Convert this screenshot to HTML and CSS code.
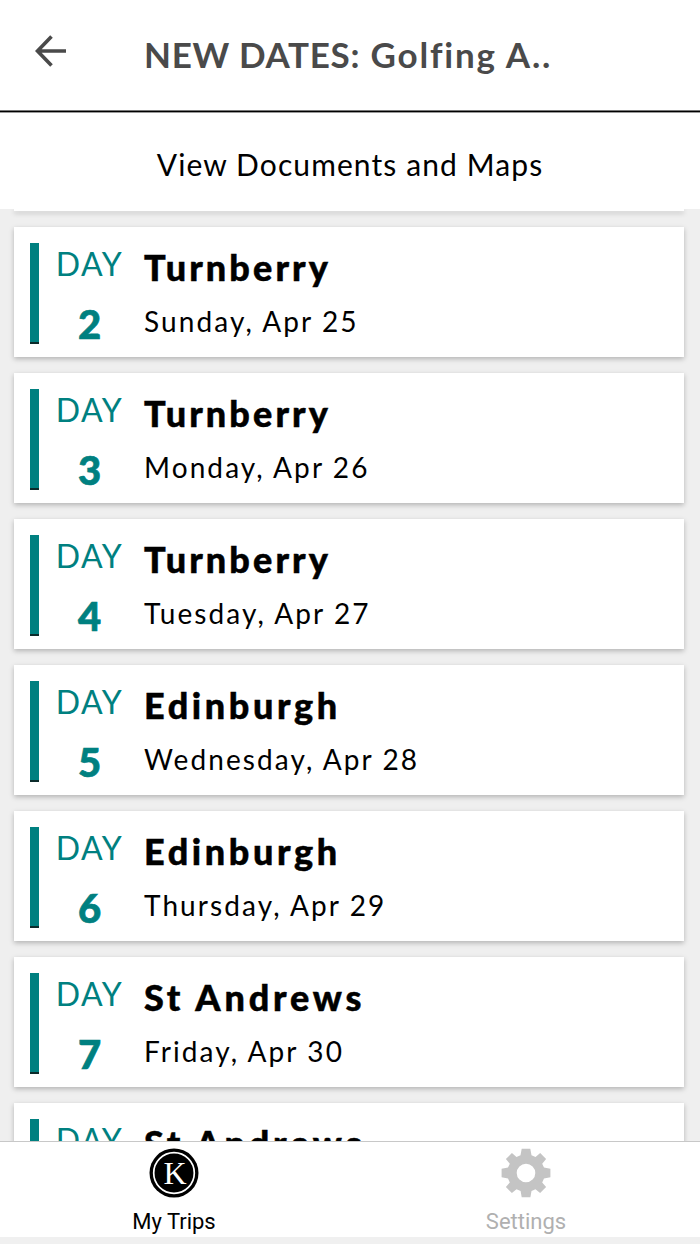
FILE: index.html
```html
<!DOCTYPE html>
<html lang="en">
<head>
  <meta charset="UTF-8">
  <title>My Trips</title>
  <link rel="stylesheet" href="styles.css">
</head>
<body>
  <div class="screen">
    <header class="header">
      <svg class="back" width="32" height="32" viewBox="0 0 32 32">
        <path d="M31 16H3M16.5 1.5L2.5 16L16.5 30.5" fill="none" stroke="#4a4a4a" stroke-width="3.6"/>
      </svg>
      <h1 class="title"><span class="notice">NEW DATES:</span> Golfing A..</h1>
    </header>

    <div class="documents">View Documents and Maps</div>

    <main class="days">
      <div class="card card-end"></div>
      <div class="card">
        <div class="bar"></div>
        <div class="day"><span class="label">DAY</span><span class="number">2</span></div>
        <div class="info"><span class="place turnberry">Turnberry</span><span class="date">Sunday, Apr 25</span></div>
      </div>
      <div class="card">
        <div class="bar"></div>
        <div class="day"><span class="label">DAY</span><span class="number">3</span></div>
        <div class="info"><span class="place turnberry">Turnberry</span><span class="date">Monday, Apr 26</span></div>
      </div>
      <div class="card">
        <div class="bar"></div>
        <div class="day"><span class="label">DAY</span><span class="number">4</span></div>
        <div class="info"><span class="place turnberry">Turnberry</span><span class="date">Tuesday, Apr 27</span></div>
      </div>
      <div class="card">
        <div class="bar"></div>
        <div class="day"><span class="label">DAY</span><span class="number">5</span></div>
        <div class="info"><span class="place">Edinburgh</span><span class="date">Wednesday, Apr 28</span></div>
      </div>
      <div class="card">
        <div class="bar"></div>
        <div class="day"><span class="label">DAY</span><span class="number">6</span></div>
        <div class="info"><span class="place">Edinburgh</span><span class="date">Thursday, Apr 29</span></div>
      </div>
      <div class="card">
        <div class="bar"></div>
        <div class="day"><span class="label">DAY</span><span class="number">7</span></div>
        <div class="info"><span class="place andrews">St Andrews</span><span class="date">Friday, Apr 30</span></div>
      </div>
      <div class="card">
        <div class="bar"></div>
        <div class="day"><span class="label">DAY</span></div>
        <div class="info"><span class="place andrews">St Andrews</span></div>
      </div>
    </main>

    <nav class="tabs">
      <div class="tab active">
        <svg class="icon" width="50" height="50" viewBox="0 0 50 50">
          <circle cx="25" cy="25" r="24.5" fill="#000"/>
          <circle cx="25" cy="25" r="20.3" fill="none" stroke="#fff" stroke-width="1.7"/>
          <text x="26" y="35.5" class="logo-letter">K</text>
        </svg>
        <span>My Trips</span>
      </div>
      <div class="tab">
        <svg class="icon" width="50" height="50" viewBox="0 0 50 50">
          <path fill="#c4c4c4" fill-rule="evenodd" d="M20.7 .7H29.3L30.5 7.2L34.5 8.9L39.2 5L45.1 11L41.2 15.7L43 19.6L49.4 20.7V29.3L43 30.4L41.2 34.5L45.1 39.1L39.1 45.1L34.5 41.2L30.5 42.9L29.4 49.3H20.7L19.6 42.9L15.5 41.2L10.9 45.1L4.9 39.1L8.8 34.5L7 30.4L.6 29.3V20.7L7 19.6L8.8 15.7L4.9 11L10.9 5L15.5 8.9L19.5 7.2ZM25 15.7A9.3 9.3 0 1 0 25 34.3A9.3 9.3 0 1 0 25 15.7Z"/>
        </svg>
        <span>Settings</span>
      </div>
    </nav>
  </div>
</body>
</html>
```

FILE: styles.css
```css
body {
  margin: 0;
  font-family: Lato, "Open Sans", sans-serif;
  background-color: #f0f0f0;
  color: #000;
}

.screen {
  display: flex;
  flex-direction: column;
  height: 1237px;
  overflow: hidden;
  background-color: white;
}

.header {
  display: flex;
  box-sizing: border-box;
  height: 112px;
  padding-left: 35px;
  border-bottom: 1px solid #000;
  box-shadow: 0 1px 0 #999, inset 0 -1px 0 #777;
}

.back {
  margin-top: 35px;
}

.title {
  margin: 0 0 0 77px;
  font-size: 35px;
  line-height: 108px;
  font-weight: 700;
  letter-spacing: 1.8px;
  color: #4a4a4a;
  white-space: nowrap;
}

.notice {
  letter-spacing: 0.7px;
}

.documents {
  height: 97px;
  line-height: 104px;
  font-size: 30px;
  letter-spacing: 1.1px;
  text-align: center;
}

.days {
  display: flex;
  flex-direction: column;
  gap: 16px;
  flex: 1;
  min-height: 0;
  overflow: hidden;
  padding: 0 16px 0 14px;
  background-color: #efefef;
}

.card {
  display: flex;
  flex: none;
  box-sizing: border-box;
  height: 130px;
  padding: 16px;
  background-color: white;
  box-shadow: 0 2px 5px rgba(0, 0, 0, 0.25);
}

.card-end {
  height: 2px;
  padding: 0;
}

.bar {
  box-sizing: border-box;
  width: 9px;
  height: 101px;
  background-color: #008080;
  border-bottom: 2px solid #0c2b2b;
}

.day {
  display: flex;
  flex-direction: column;
  width: 101px;
  text-align: center;
  color: #008080;
}

.label {
  font-size: 32px;
  line-height: 42px;
  letter-spacing: 1.4px;
}

.number {
  font-size: 40px;
  line-height: 78px;
  font-weight: 900;
  -webkit-text-stroke: 0.7px #008080;
}

.info {
  display: flex;
  flex-direction: column;
  margin-left: 4px;
  white-space: nowrap;
}

.place {
  font-size: 36px;
  line-height: 48px;
  font-weight: 900;
  letter-spacing: 3.6px;
  -webkit-text-stroke: 0.5px #000;
}

.turnberry {
  letter-spacing: 3.1px;
}

.andrews {
  letter-spacing: 3.8px;
}

.date {
  font-size: 28px;
  line-height: 60px;
  letter-spacing: 2.1px;
}

.tabs {
  display: flex;
  box-sizing: border-box;
  height: 96px;
  background-color: white;
  border-top: 1px solid #c8c8c8;
}

.tab {
  display: flex;
  flex-direction: column;
  align-items: center;
  width: 352px;
  flex: none;
  box-sizing: border-box;
  padding: 6px 4px 0 0;
  font-family: Roboto, sans-serif;
  font-size: 22px;
  color: #b0b0b0;
}

.icon {
  flex: none;
}

.tab span {
  line-height: 48px;
}

.active {
  color: #000;
}

.logo-letter {
  font-family: "Liberation Serif", serif;
  font-size: 32px;
  text-anchor: middle;
  fill: #fff;
}
```
